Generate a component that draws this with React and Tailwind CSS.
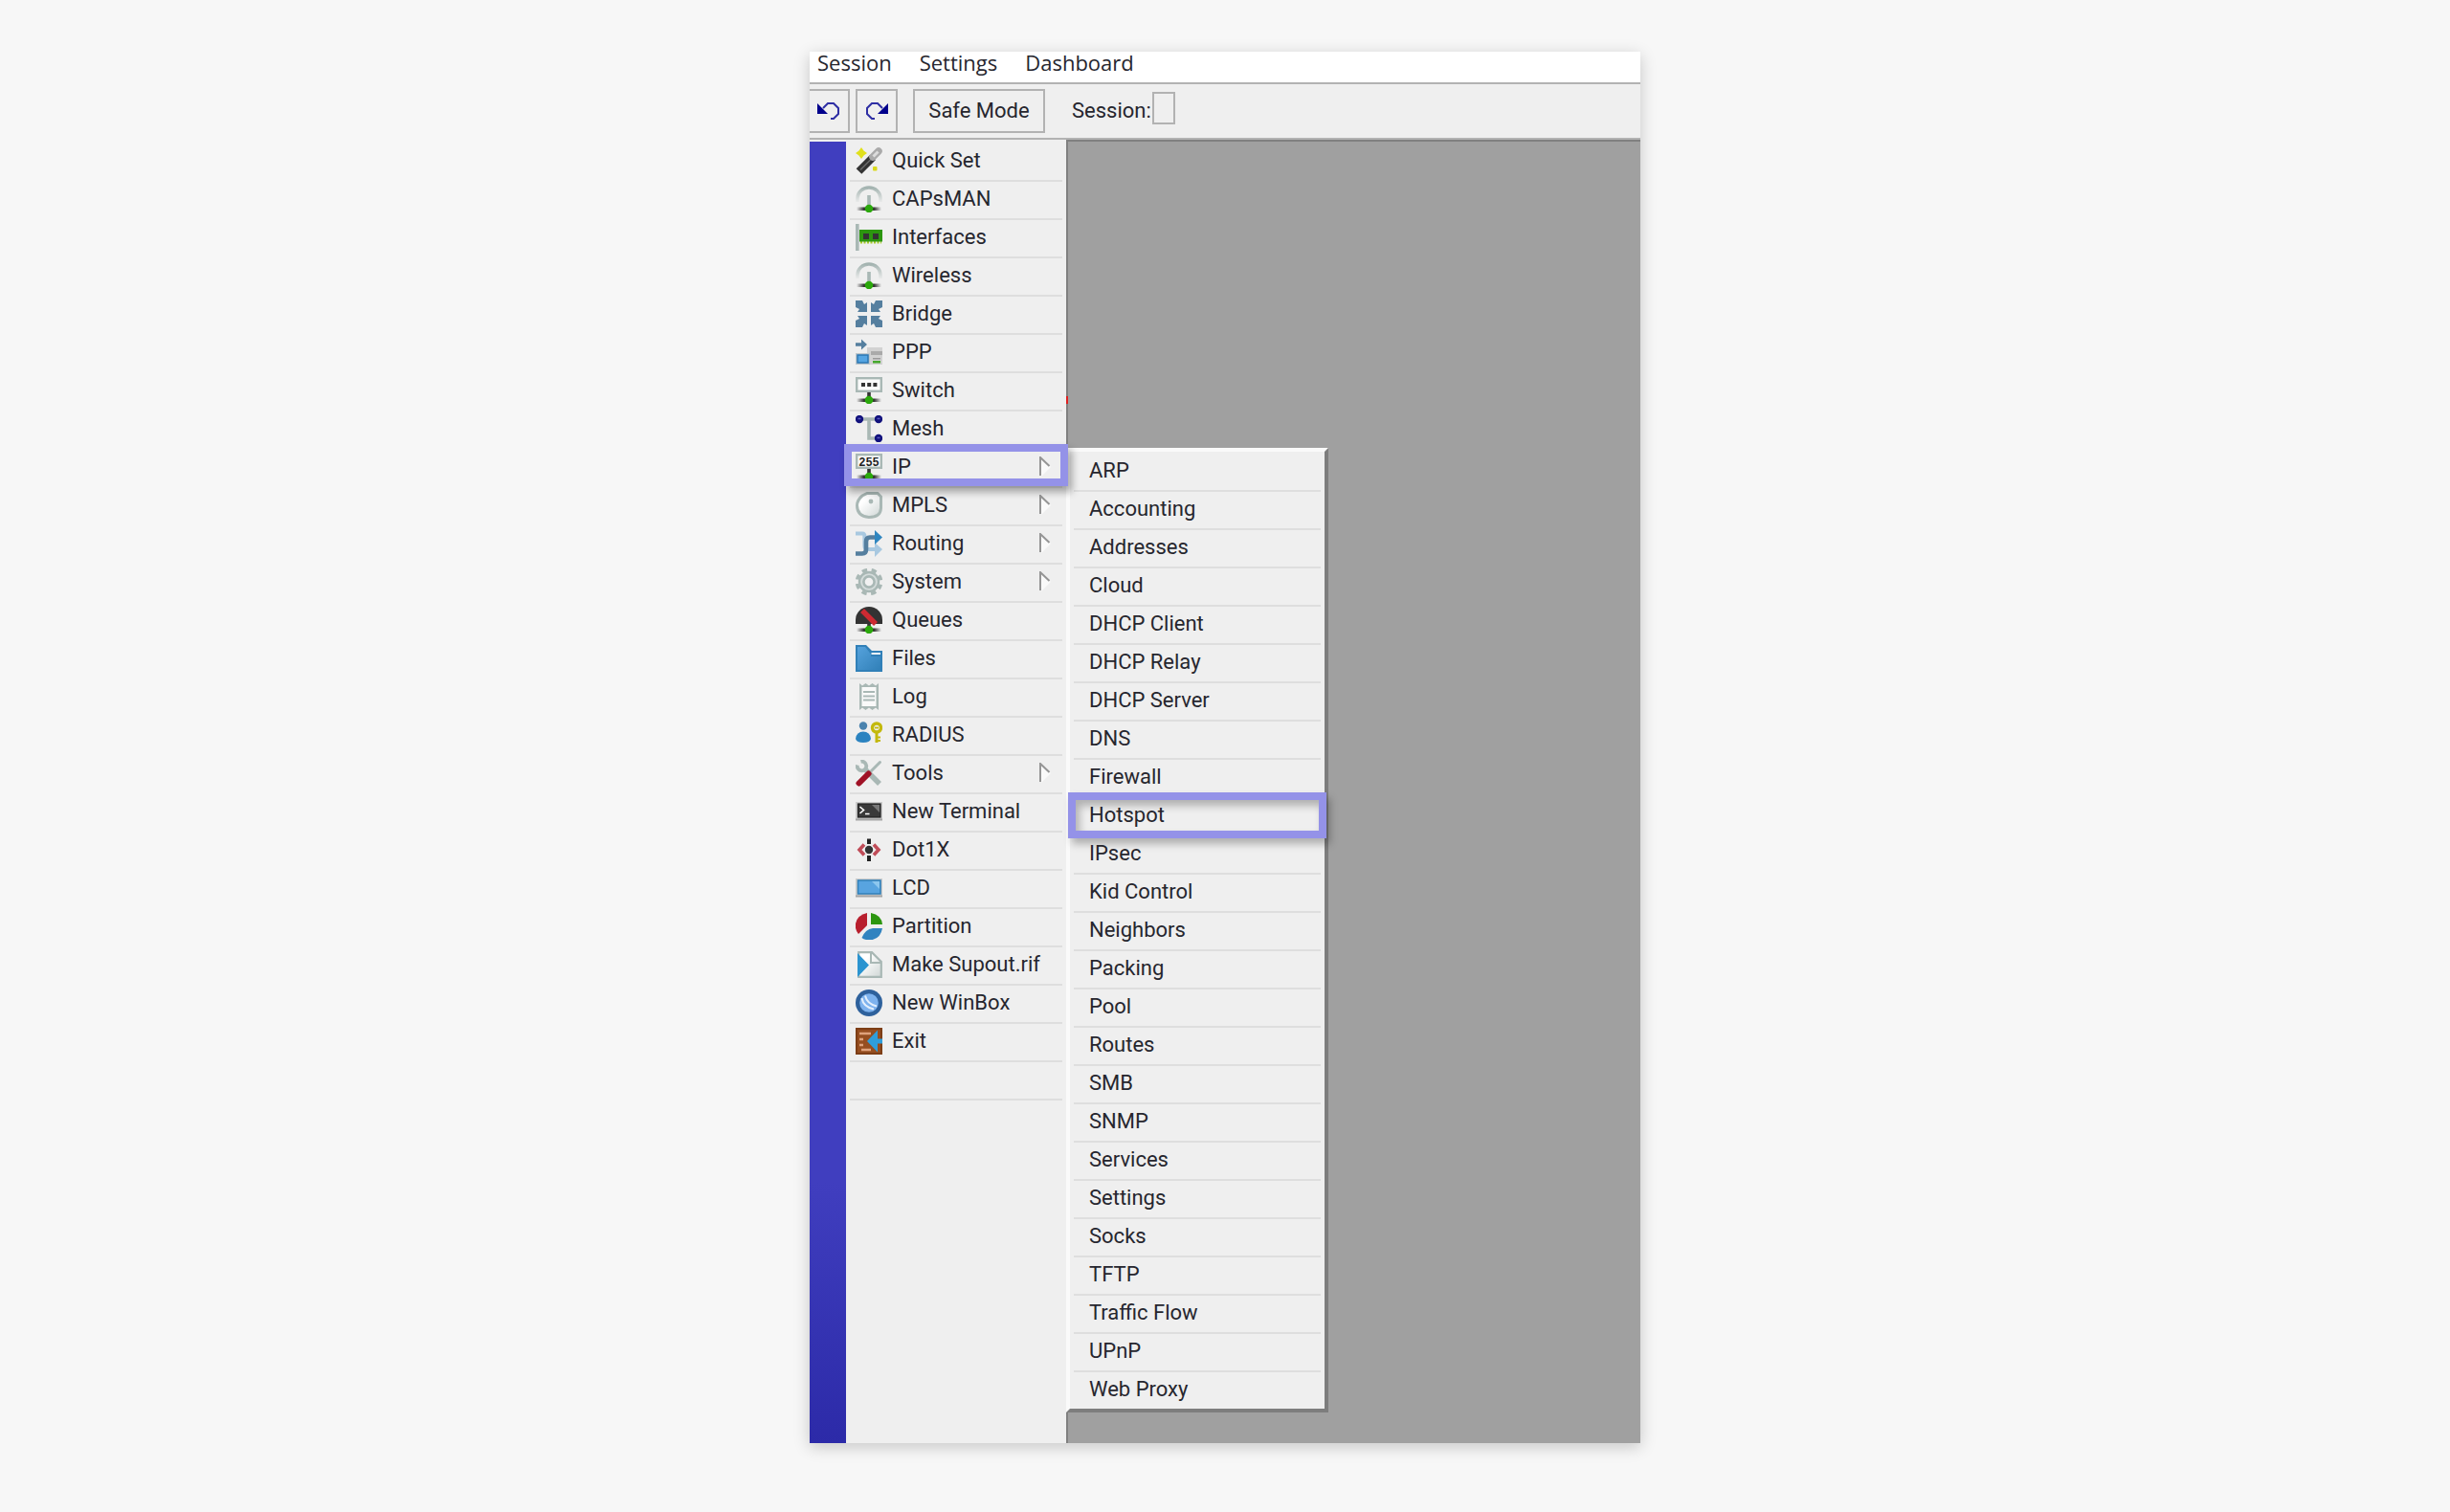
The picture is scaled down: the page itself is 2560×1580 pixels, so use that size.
import React from 'react'

const GRAY = '#a9b8b5'
const STEEL = '#557f9f'

// network line with the green node, shared by several icons
function Base() {
  return (
    <>
      <rect x="1" y="22.5" width="26" height="3.5" fill="url(#wire)" />
      <circle cx="14" cy="24" r="4.3" fill="#2ba80c" />
    </>
  )
}

function Antenna() {
  return (
    <>
      <path d="M2 17V13A12 11 0 0 1 26 13V17" fill="none" stroke="url(#dish)" strokeWidth="3.4" />
      <rect x="12.2" y="10" width="3.6" height="10" fill={GRAY} />
      <Base />
    </>
  )
}

function Screen({ children }) {
  return (
    <>
      <rect x="1.2" y="1.2" width="25.6" height="13.6" fill="#fbfbfb" stroke={GRAY} strokeWidth="2.4" />
      <rect x="12.2" y="16" width="3.6" height="5" fill="#333" />
      <Base />
      {children}
    </>
  )
}

const icons = {
  wand: (
    <>
      <path d="M3.5 25L18 10.5" stroke="#333" strokeWidth="8" />
      <path d="M5 23.5L16 12.5" stroke="#6a6a6a" strokeWidth="1.6" />
      <path d="M18 10L24 4" stroke="#aaa" strokeWidth="7.5" strokeLinecap="round" />
      <path d="M18.5 9.5L23.5 4.5" stroke="#dcdcdc" strokeWidth="3" />
      <path d="M6 0L8.5 3.5L12 6L8.5 8.5L6 12L3.5 8.5L0 6L3.5 3.5Z" fill="#e0e01c" />
      <rect x="18" y="20" width="4.5" height="4.5" rx="1" fill="#d9d91c" />
    </>
  ),
  antenna: <Antenna />,
  card: (
    <>
      <rect x="0" y="0" width="3.6" height="28" fill={GRAY} />
      <path d="M5 19H27" stroke="#a6c92a" strokeWidth="3" strokeDasharray="2 1.5" />
      <rect x="4" y="6" width="24" height="12.5" fill="#2c960f" />
      <rect x="8" y="10" width="6" height="6" fill="#333" />
      <rect x="18" y="10" width="6" height="6" fill="#333" />
    </>
  ),
  bridge: (
    <g fill={STEEL}>
      <path d="M0 0H7L9 4L12 2V12H2L4 9L0 7Z" />
      <path d="M28 0H21L19 4L16 2V12H26L24 9L28 7Z" />
      <path d="M0 28H7L9 24L12 26V16H2L4 19L0 21Z" />
      <path d="M28 28H21L19 24L16 26V16H26L24 19L28 21Z" />
    </g>
  ),
  ppp: (
    <>
      <path d="M0 4.2H6V0.5L12 6L6 11.5V7.8H0Z" fill={STEEL} />
      <rect x="12" y="9" width="16" height="18" fill="#d2d2d2" />
      <rect x="16" y="13" width="12" height="4" fill="#aaa" />
      <rect x="18" y="20" width="8" height="1.5" fill="#9a9a9a" />
      <rect x="18" y="23" width="8" height="2.5" fill="#46a82c" />
      <rect x="0" y="15" width="15" height="12" fill="#bfc7cc" />
      <rect x="2" y="17" width="11" height="8" fill="#55a5e2" stroke="#2b78b4" strokeWidth="1.5" />
    </>
  ),
  switch: (
    <Screen>
      <path d="M6 8H22.5" stroke="#333" strokeWidth="4" strokeDasharray="4 2.2" />
    </Screen>
  ),
  mesh: (
    <>
      <path d="M4 4H24M14 4V24H24" fill="none" stroke={GRAY} strokeWidth="3.6" />
      <circle cx="4" cy="4" r="4.2" fill="#11117c" />
      <circle cx="24" cy="4" r="4.2" fill="#11117c" />
      <circle cx="24" cy="24" r="4.2" fill="#11117c" />
      <path d="M2.5 3.5H5.5M22.5 3.5H25.5M22.5 23.5H25.5" stroke="#5a5ac0" strokeWidth="1.5" />
    </>
  ),
  ip: (
    <Screen>
      <text x="14" y="13" textAnchor="middle" fill="#222" className="font-['Liberation_Mono',monospace] text-[12px] font-bold">255</text>
    </Screen>
  ),
  tag: (
    <>
      <path d="M12 1.5H23L26.5 5V17Q26 26.5 14 26.5Q1.5 25.5 1.5 14Q2 8 7 4Z" fill="url(#paper)" stroke={GRAY} strokeWidth="3" />
      <circle cx="16" cy="10" r="2.4" fill={GRAY} />
    </>
  ),
  routing: (
    <>
      <path d="M0 3.5H7Q9.5 3.5 9.5 7V16Q9.5 20 13 20H22" fill="none" stroke="#a8c8e0" strokeWidth="4.2" />
      <path d="M20 13L28 20L20 28Z" fill="#a8c8e0" />
      <path d="M0 24.5H7Q11 24.5 11 20V12Q11 7.5 15 7.5H21" fill="none" stroke={STEEL} strokeWidth="4.6" />
      <path d="M20 0L28 7.5L20 15Z" fill="#2f86c0" />
    </>
  ),
  gear: (
    <>
      <circle cx="14" cy="14" r="12.5" fill="none" stroke={GRAY} strokeWidth="3.6" strokeDasharray="5.4 4.417" strokeDashoffset="2.7" transform="rotate(22.5 14 14)" />
      <circle cx="14" cy="14" r="10" fill="#d5dcdb" stroke={GRAY} strokeWidth="2.4" />
      <circle cx="14" cy="14" r="5.6" fill="#f1f1f1" stroke={GRAY} strokeWidth="2.6" />
    </>
  ),
  queues: (
    <>
      <path d="M0 18V14A14 14 0 0 1 28 14V18Z" fill="#333" />
      <rect x="12.2" y="17" width="3.6" height="4" fill="#333" />
      <path d="M7 4L21 18" stroke="#cc2a32" strokeWidth="5.5" />
      <Base />
    </>
  ),
  folder: (
    <>
      <path d="M0 0H11L17 6H28V28H0Z" fill="#3180b8" />
      <path d="M2 2H10L16 9.5V12H26V26H2Z" fill="url(#blue)" />
      <path d="M16.5 9H26" stroke="#eef4f8" strokeWidth="2" />
    </>
  ),
  log: (
    <>
      <path d="M4 0L7 2.5L10.5 0L14 2.5L17.5 0L21 2.5L24 0V28L21 25.5L17.5 28L14 25.5L10.5 28L7 25.5L4 28Z" fill={GRAY} />
      <rect x="6.5" y="4" width="15" height="20" fill="#fafafa" />
      <path d="M8 9H20M8 13.5H20M8 17.5H20" stroke={GRAY} strokeWidth="1.8" />
    </>
  ),
  radius: (
    <>
      <circle cx="8" cy="4.5" r="4.2" fill="#4a83ae" />
      <path d="M0 18Q1 10.5 8 10.5Q15 10.5 16 18Q15 22 8 22Q1 22 0 18Z" fill="#2b83c0" />
      <rect x="20.5" y="10" width="3" height="12" fill="#c3b90c" />
      <path d="M23 16.5H26M23 20H26" stroke="#c3b90c" strokeWidth="2" />
      <circle cx="22" cy="6.5" r="4.5" fill="#efefef" stroke="#c3b90c" strokeWidth="3.4" />
      <path d="M20 6.5H24" stroke="#c3b90c" strokeWidth="1.8" />
    </>
  ),
  tools: (
    <>
      <path d="M25.5 2.5L15 13" stroke={GRAY} strokeWidth="3" strokeLinecap="round" />
      <path d="M9 9L25 25" stroke={GRAY} strokeWidth="5.5" />
      <path d="M5.5 1.8A4.8 4.8 0 1 1 1.8 5.5" fill="none" stroke={GRAY} strokeWidth="3.8" />
      <path d="M3.5 24.5L13.5 14.5" stroke="#a01226" strokeWidth="6" strokeLinecap="round" />
    </>
  ),
  terminal: (
    <>
      <rect x="0" y="4" width="28" height="19" fill="#ccc" />
      <rect x="2.5" y="6" width="23.5" height="14" fill="#3a3a3a" stroke="#222" strokeWidth="1.2" />
      <path d="M17 7L25 7V15Z" fill="#777" />
      <path d="M4.5 9L8.5 12.5L4.5 16M10 16.5H14.5" fill="none" stroke="#fff" strokeWidth="1.6" />
      <rect x="0" y="21.5" width="28" height="2" fill="#a5a5a5" />
    </>
  ),
  dot1x: (
    <>
      <path d="M9 8.5L4 14L9 19.5M19 8.5L24 14L19 19.5" fill="none" stroke="#c04c58" strokeWidth="3.6" />
      <rect x="12" y="2.5" width="4" height="5.5" fill="#222" />
      <rect x="12" y="20" width="4" height="6" fill="#222" />
      <circle cx="14" cy="14" r="4.2" fill="#333" />
    </>
  ),
  lcd: (
    <>
      <rect x="0" y="4" width="28" height="19" fill="#ccc" />
      <rect x="2.5" y="6" width="23.5" height="14" fill="#58a4e0" stroke="#2f7fb8" strokeWidth="1.5" />
      <path d="M17 7H25V15Z" fill="#8cc6ee" />
      <rect x="0" y="21.5" width="28" height="2" fill="#a5a5a5" />
    </>
  ),
  pie: (
    <>
      <path d="M12 0V13L3 22Q-1 17 0 11Q2 2 12 0Z" fill="#b81f2e" />
      <path d="M16 0Q27 2 28 12H16Z" fill="#2c960f" />
      <path d="M28 16Q26 28 14 28.5Q9 28 6.5 26Q10 17 18 16Z" fill="#3183c0" />
    </>
  ),
  supout: (
    <>
      <path d="M3.2 1.2H17L26.8 11V26.8H3.2Z" fill="url(#paper)" stroke={GRAY} strokeWidth="2.2" />
      <path d="M16 1.5V12H27" fill="none" stroke={GRAY} strokeWidth="2" />
      <path d="M2 2L14 14.5L2 27Z" fill="#2b94d0" />
    </>
  ),
  winbox: (
    <>
      <circle cx="14" cy="14" r="14" fill="#2e619c" />
      <circle cx="14" cy="14" r="9.8" fill="#7db2ee" />
      <path d="M6.5 9Q8 18 19 20.5M10 6.5Q12 15 22 17.5" fill="none" stroke="#e3effc" strokeWidth="2" />
    </>
  ),
  exit: (
    <>
      <rect width="28" height="28" fill="#7d3e16" />
      <rect x="2" y="2" width="24" height="24" fill="#964e20" />
      <path d="M4 6H16M4 12H8M4 18H8M6 23H16" stroke="#dfa27c" strokeWidth="2.6" />
      <path d="M12 14L23 2.5V11.5H28V16.5H23V25.5Z" fill="#2f9edb" />
    </>
  ),
}

const mainMenu = [
  { label: 'Quick Set', icon: 'wand' },
  { label: 'CAPsMAN', icon: 'antenna' },
  { label: 'Interfaces', icon: 'card' },
  { label: 'Wireless', icon: 'antenna' },
  { label: 'Bridge', icon: 'bridge' },
  { label: 'PPP', icon: 'ppp' },
  { label: 'Switch', icon: 'switch' },
  { label: 'Mesh', icon: 'mesh' },
  { label: 'IP', icon: 'ip', sub: true, active: true },
  { label: 'MPLS', icon: 'tag', sub: true },
  { label: 'Routing', icon: 'routing', sub: true },
  { label: 'System', icon: 'gear', sub: true },
  { label: 'Queues', icon: 'queues' },
  { label: 'Files', icon: 'folder' },
  { label: 'Log', icon: 'log' },
  { label: 'RADIUS', icon: 'radius' },
  { label: 'Tools', icon: 'tools', sub: true },
  { label: 'New Terminal', icon: 'terminal' },
  { label: 'Dot1X', icon: 'dot1x' },
  { label: 'LCD', icon: 'lcd' },
  { label: 'Partition', icon: 'pie' },
  { label: 'Make Supout.rif', icon: 'supout' },
  { label: 'New WinBox', icon: 'winbox' },
  { label: 'Exit', icon: 'exit' },
]

const ipMenu = [
  'ARP', 'Accounting', 'Addresses', 'Cloud', 'DHCP Client', 'DHCP Relay', 'DHCP Server', 'DNS',
  'Firewall', 'Hotspot', 'IPsec', 'Kid Control', 'Neighbors', 'Packing', 'Pool', 'Routes', 'SMB',
  'SNMP', 'Services', 'Settings', 'Socks', 'TFTP', 'Traffic Flow', 'UPnP', 'Web Proxy',
]

// gradients used by the icons
function Gradients() {
  return (
    <svg width="0" height="0" className="absolute" aria-hidden="true">
      <defs>
        <linearGradient id="wire">
          <stop offset="0" stopColor="#333" stopOpacity="0" />
          <stop offset="0.3" stopColor="#333" />
          <stop offset="0.7" stopColor="#333" />
          <stop offset="1" stopColor="#333" stopOpacity="0" />
        </linearGradient>
        <linearGradient id="dish" x1="0" y1="0" x2="0" y2="1">
          <stop offset="0" stopColor="#a3b3b0" />
          <stop offset="1" stopColor="#a9b8b5" stopOpacity="0.1" />
        </linearGradient>
        <linearGradient id="paper" x1="0" y1="0" x2="1" y2="1">
          <stop offset="0.3" stopColor="#fff" />
          <stop offset="1" stopColor="#cfd6d5" />
        </linearGradient>
        <linearGradient id="blue" x1="0" y1="0" x2="1" y2="1">
          <stop offset="0" stopColor="#55a2dc" />
          <stop offset="1" stopColor="#3180b8" />
        </linearGradient>
      </defs>
    </svg>
  )
}

function SubArrow() {
  return (
    <svg width="12" height="22" viewBox="0 0 12 22" className="mr-3 ml-auto shrink-0" aria-hidden="true">
      <path d="M2 2L12 11L2 21Z" fill="#fafafa" />
      <path d="M1 20V1L10.5 10" fill="none" stroke="#959595" strokeWidth="2" />
    </svg>
  )
}

function MenuBar() {
  return (
    <nav className="flex h-8 items-start gap-[29px] bg-white pl-2 font-['Open_Sans',sans-serif] text-[22px] leading-[22px]">
      <button type="button">Session</button>
      <button type="button">Settings</button>
      <button type="button">Dashboard</button>
    </nav>
  )
}

function Toolbar() {
  return (
    <div className="flex h-[60px] items-center border-t-2 border-b-2 border-[#b2b2b2] bg-[#efefef]">
      <button type="button" aria-label="Undo" className="flex h-[46px] w-[42px] items-center justify-center border-2 border-l-0 border-[#b2b2b2]">
        <svg width="24" height="20" viewBox="0 0 24 20">
          <path d="M6 7L11 2H17L22 7V13L17 18H14" fill="none" stroke="#2f2fa4" strokeWidth="2" />
          <path d="M0 2L11 13H0Z" fill="#00008c" />
        </svg>
      </button>
      <button type="button" aria-label="Redo" className="ml-1.5 flex h-[46px] w-11 items-center justify-center border-2 border-[#b2b2b2]">
        <svg width="24" height="20" viewBox="0 0 24 20">
          <path d="M18 7L13 2H7L2 7V13L7 18H10" fill="none" stroke="#2f2fa4" strokeWidth="2" />
          <path d="M24 2L13 13H24Z" fill="#00008c" />
        </svg>
      </button>
      <button type="button" className="ml-4 h-[46px] w-[138px] border-2 border-[#b2b2b2]">Safe Mode</button>
      <label htmlFor="session" className="ml-7">Session:</label>
      <input id="session" readOnly className="mb-1.5 ml-px h-[34px] w-6 border-2 border-[#b2b2b2]" />
    </div>
  )
}

function Sidebar() {
  return (
    <ul className="w-[230px] shrink-0 bg-[#efefef] px-1 pt-1">
      {mainMenu.map(m => (
        <li key={m.label} className="relative h-10 border-b-2 border-[#dedede]">
          <button type="button" className="flex h-full w-full items-center gap-2.5 pb-0.5 pl-1.5 text-left">
            <svg width="28" height="28" viewBox="0 0 28 28" className="shrink-0" aria-hidden="true">{icons[m.icon]}</svg>
            {m.label}
            {m.sub && <SubArrow />}
          </button>
          {m.active && <span className="pointer-events-none absolute -inset-x-1.5 -top-1.5 z-10 h-11 border-8 border-[#9492e8] shadow-[4px_6px_8px_#0005]" />}
        </li>
      ))}
      <li className="h-10 border-b-2 border-[#dedede]" />
    </ul>
  )
}

function SubMenu() {
  return (
    <ul className="w-[274px] border-4 border-t-[#fafafa] border-r-[#7d7d7d] border-b-[#7d7d7d] border-l-[#fafafa] bg-[#efefef] px-1 pt-0.5">
      {ipMenu.map(name => (
        <li key={name} className="relative h-10 border-b-2 border-[#dedede] last:h-[38px] last:border-b-0">
          <button type="button" className="h-full w-full pb-0.5 pl-4 text-left">{name}</button>
          {name === 'Hotspot' && (
            <span className="pointer-events-none absolute -inset-x-1.5 -top-1.5 h-12 border-8 border-[#9492e8] shadow-[4px_6px_8px_#0004,inset_4px_6px_8px_#0004]" />
          )}
        </li>
      ))}
    </ul>
  )
}

export default function App() {
  return (
    <div className="min-h-screen bg-[#f7f7f7] px-4 pt-[54px] pb-[72px] font-[Roboto,sans-serif] text-[22px] leading-7 text-[#26262e]">
      <Gradients />
      <main className="mx-auto max-w-[868px] shadow-[0_4px_16px_#0003]">
        <MenuBar />
        <Toolbar />
        <div className="flex">
          <div className="w-[38px] shrink-0 border-t-2 border-[#efefef] bg-linear-to-b from-[#403ebf] from-80% to-[#2c2aa8]" />
          <Sidebar />
          <section className="relative grow bg-[#a0a0a0] pt-[322px] pb-8 shadow-[inset_2px_2px_0_#808080]">
            <span className="absolute top-[268px] left-0 h-2 w-0.5 bg-[#e02020]" />
            <SubMenu />
          </section>
        </div>
      </main>
    </div>
  )
}
